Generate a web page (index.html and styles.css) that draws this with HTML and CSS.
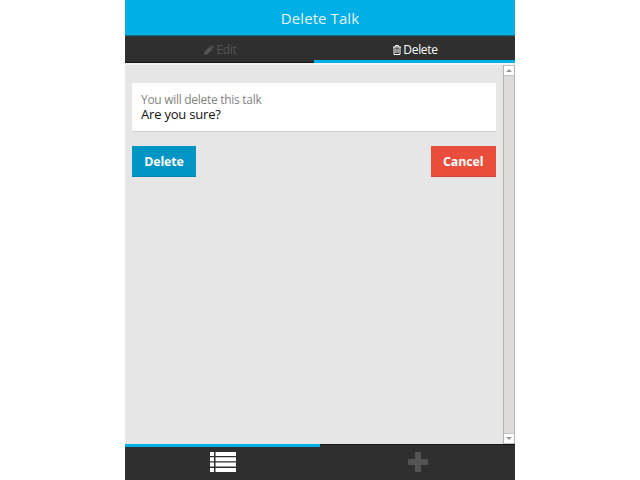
FILE: index.html
```html
<!DOCTYPE html>
<html lang="en">
<head>
<meta charset="utf-8">
<title>Delete Talk</title>
<link rel="stylesheet" href="styles.css">
</head>
<body>
<div class="app">
  <header class="header"><span>Delete Talk</span></header>
  <nav class="tabs">
    <div class="tab">
      <svg class="pencil" width="10" height="10" viewBox="0 0 10 10"><path fill="currentColor" d="M0 10l.7-3.500L5.700 1.400 8.600 4.300 3.500 9.300zM6.300.8L6.900.3q.5-.5 1 0l1.800 1.800q.5.500 0 1l-.5.6z"/></svg>
      <span>Edit</span>
    </div>
    <div class="tab tab-active">
      <svg class="trash" width="8" height="10" viewBox="0 0 8 10"><path fill="none" stroke="currentColor" d="M0 2h8M2.500 2V.5h3V2M1 2v7.500h6V2"/><path stroke="currentColor" stroke-width=".7" d="M2.700 3.500v4.500M4 3.500v4.500M5.300 3.500v4.500"/></svg>
      <span>Delete</span>
    </div>
  </nav>
  <div class="body">
    <main class="content">
      <section class="card">
        <p class="hint">You will delete this talk</p>
        <p class="question">Are you sure?</p>
      </section>
      <div class="actions">
        <button class="btn btn-delete">Delete</button>
        <button class="btn btn-cancel">Cancel</button>
      </div>
    </main>
    <div class="scrollbar">
      <div class="arrow"><svg width="6" height="3" viewBox="0 0 6 3"><path fill="#999" d="M0 3l3-3 3 3z"/></svg></div>
      <div class="arrow"><svg width="6" height="3" viewBox="0 0 6 3"><path fill="#999" d="M0 0l3 3 3-3z"/></svg></div>
    </div>
  </div>
  <footer class="footer">
    <div class="foot foot-active">
      <svg width="26" height="20" viewBox="0 0 26 20"><path fill="#fff" d="M0 0h4v4H0zM5.500 0H26v4H5.500zM0 5.300h4v4H0zM5.500 5.300H26v4H5.500zM0 10.600h4v4H0zM5.500 10.600H26v4H5.500zM0 16h4v4H0zM5.500 16H26v4H5.500z"/></svg>
    </div>
    <div class="foot">
      <svg width="20" height="20" viewBox="0 0 20 20"><path fill="#545454" d="M8 0h4q1 0 1 1v6h6q1 0 1 1v4q0 1-1 1h-6v6q0 1-1 1H8q-1 0-1-1v-6H1q-1 0-1-1V8q0-1 1-1h6V1q0-1 1-1z"/></svg>
    </div>
  </footer>
</div>
</body>
</html>
```
FILE: styles.css
```css
* { box-sizing: border-box; }
body {
  margin: 0;
  background: #fff;
  font-family: "Open Sans", "Noto Sans", sans-serif;
}
.app {
  width: 390px;
  height: 480px;
  margin-left: 125px;
  display: flex;
  flex-direction: column;
}
.header {
  height: 36px;
  background: #00aee6;
  border-bottom: 1px solid #1b6f8b;
  color: #e4f4fa;
  font-size: 15px;
  line-height: 36px;
  letter-spacing: .08px;
  text-align: center;
}
.tabs {
  height: 27px;
  display: flex;
  background: #2f2f2f;
}
.tab {
  width: 189px;
  padding: 1px 0 0 2px;
  display: flex;
  align-items: center;
  justify-content: center;
  gap: 2px;
  color: #545454;
  font-size: 12px;
  letter-spacing: -.3px;
  line-height: 24px;
  border-bottom: 1px solid #151515;
}
.tab-active {
  width: 201px;
  padding: 3px 0 0 2px;
  color: #fff;
  border-bottom: 3px solid #00b0e8;
}
.body {
  flex: 1;
  display: flex;
  min-height: 0;
  background: #e6e6e6;
  border-top: 2px solid #f2f2f2;
}
.content {
  flex: 1;
  padding: 18px 7px 0;
}
.card {
  height: 49px;
  padding: 10px 9px 0;
  background: #fff;
  border-bottom: 1px solid #cfcfcf;
}
.card p { margin: 0; line-height: 14px; }
.hint { color: #838383; font-size: 12px; letter-spacing: -.29px; }
.question { color: #111; font-size: 13px; letter-spacing: -.2px; }
.actions {
  margin-top: 14px;
  display: flex;
  justify-content: space-between;
}
.btn {
  height: 31px;
  padding: 1px 0 0;
  border: 0;
  color: #fff;
  font: bold 12.4px/30px "Open Sans", "Noto Sans", sans-serif;
  letter-spacing: -.1px;
}
.btn-delete {
  width: 64px;
  background: #0095c3;
  border-bottom: 1px solid #0086af;
}
.btn-cancel {
  width: 65.5px;
  background: #e94e3d;
  border-bottom: 1px solid #d24637;
}
.scrollbar {
  width: 12px;
  display: flex;
  flex-direction: column;
  justify-content: space-between;
  background: #dddcda;
  border: solid #b4b4b4;
  border-width: 0 1px;
}
.arrow {
  height: 11px;
  display: flex;
  align-items: center;
  justify-content: center;
  background: #fff;
  border: 1px solid #c4c4c4;
  border-width: 1px 0;
}
.footer {
  height: 36px;
  display: flex;
  background: #2f2f2f;
}
.foot {
  flex: 1;
  display: flex;
  align-items: flex-start;
  justify-content: center;
  padding-top: 7px;
  border-top: 1px solid #161616;
}
.foot-active {
  padding-top: 5px;
  border-top: 3px solid #00b0e8;
}
```
